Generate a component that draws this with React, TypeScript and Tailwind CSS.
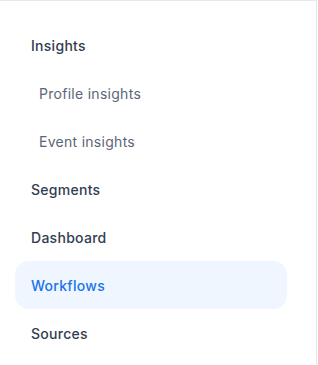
const navItems = [
  { label: 'Insights', sub: false },
  { label: 'Profile insights', sub: true },
  { label: 'Event insights', sub: true },
  { label: 'Segments', sub: false },
  { label: 'Dashboard', sub: false },
  { label: 'Workflows', sub: false, active: true },
  { label: 'Sources', sub: false },
];

export default function App() {
  return (
    <div className="w-[317px] h-[365px] bg-white border-t border-r border-[#e6e8eb] pt-5 font-['Inter',sans-serif]">
      <nav className="flex flex-col">
        {navItems.map((item) => (
          <div
            key={item.label}
            className={
              'ml-[15px] w-[272px] h-12 flex items-center rounded-[14px] text-[14px] tracking-[0.02em] ' +
              (item.sub ? 'pl-6 text-[#5b6577] font-normal ' : 'pl-4 font-medium ') +
              (item.active ? 'bg-[#eff6ff] text-[#1a73e8]' : item.sub ? '' : 'text-[#323d4f]')
            }
          >
            {item.label}
          </div>
        ))}
      </nav>
    </div>
  );
}
